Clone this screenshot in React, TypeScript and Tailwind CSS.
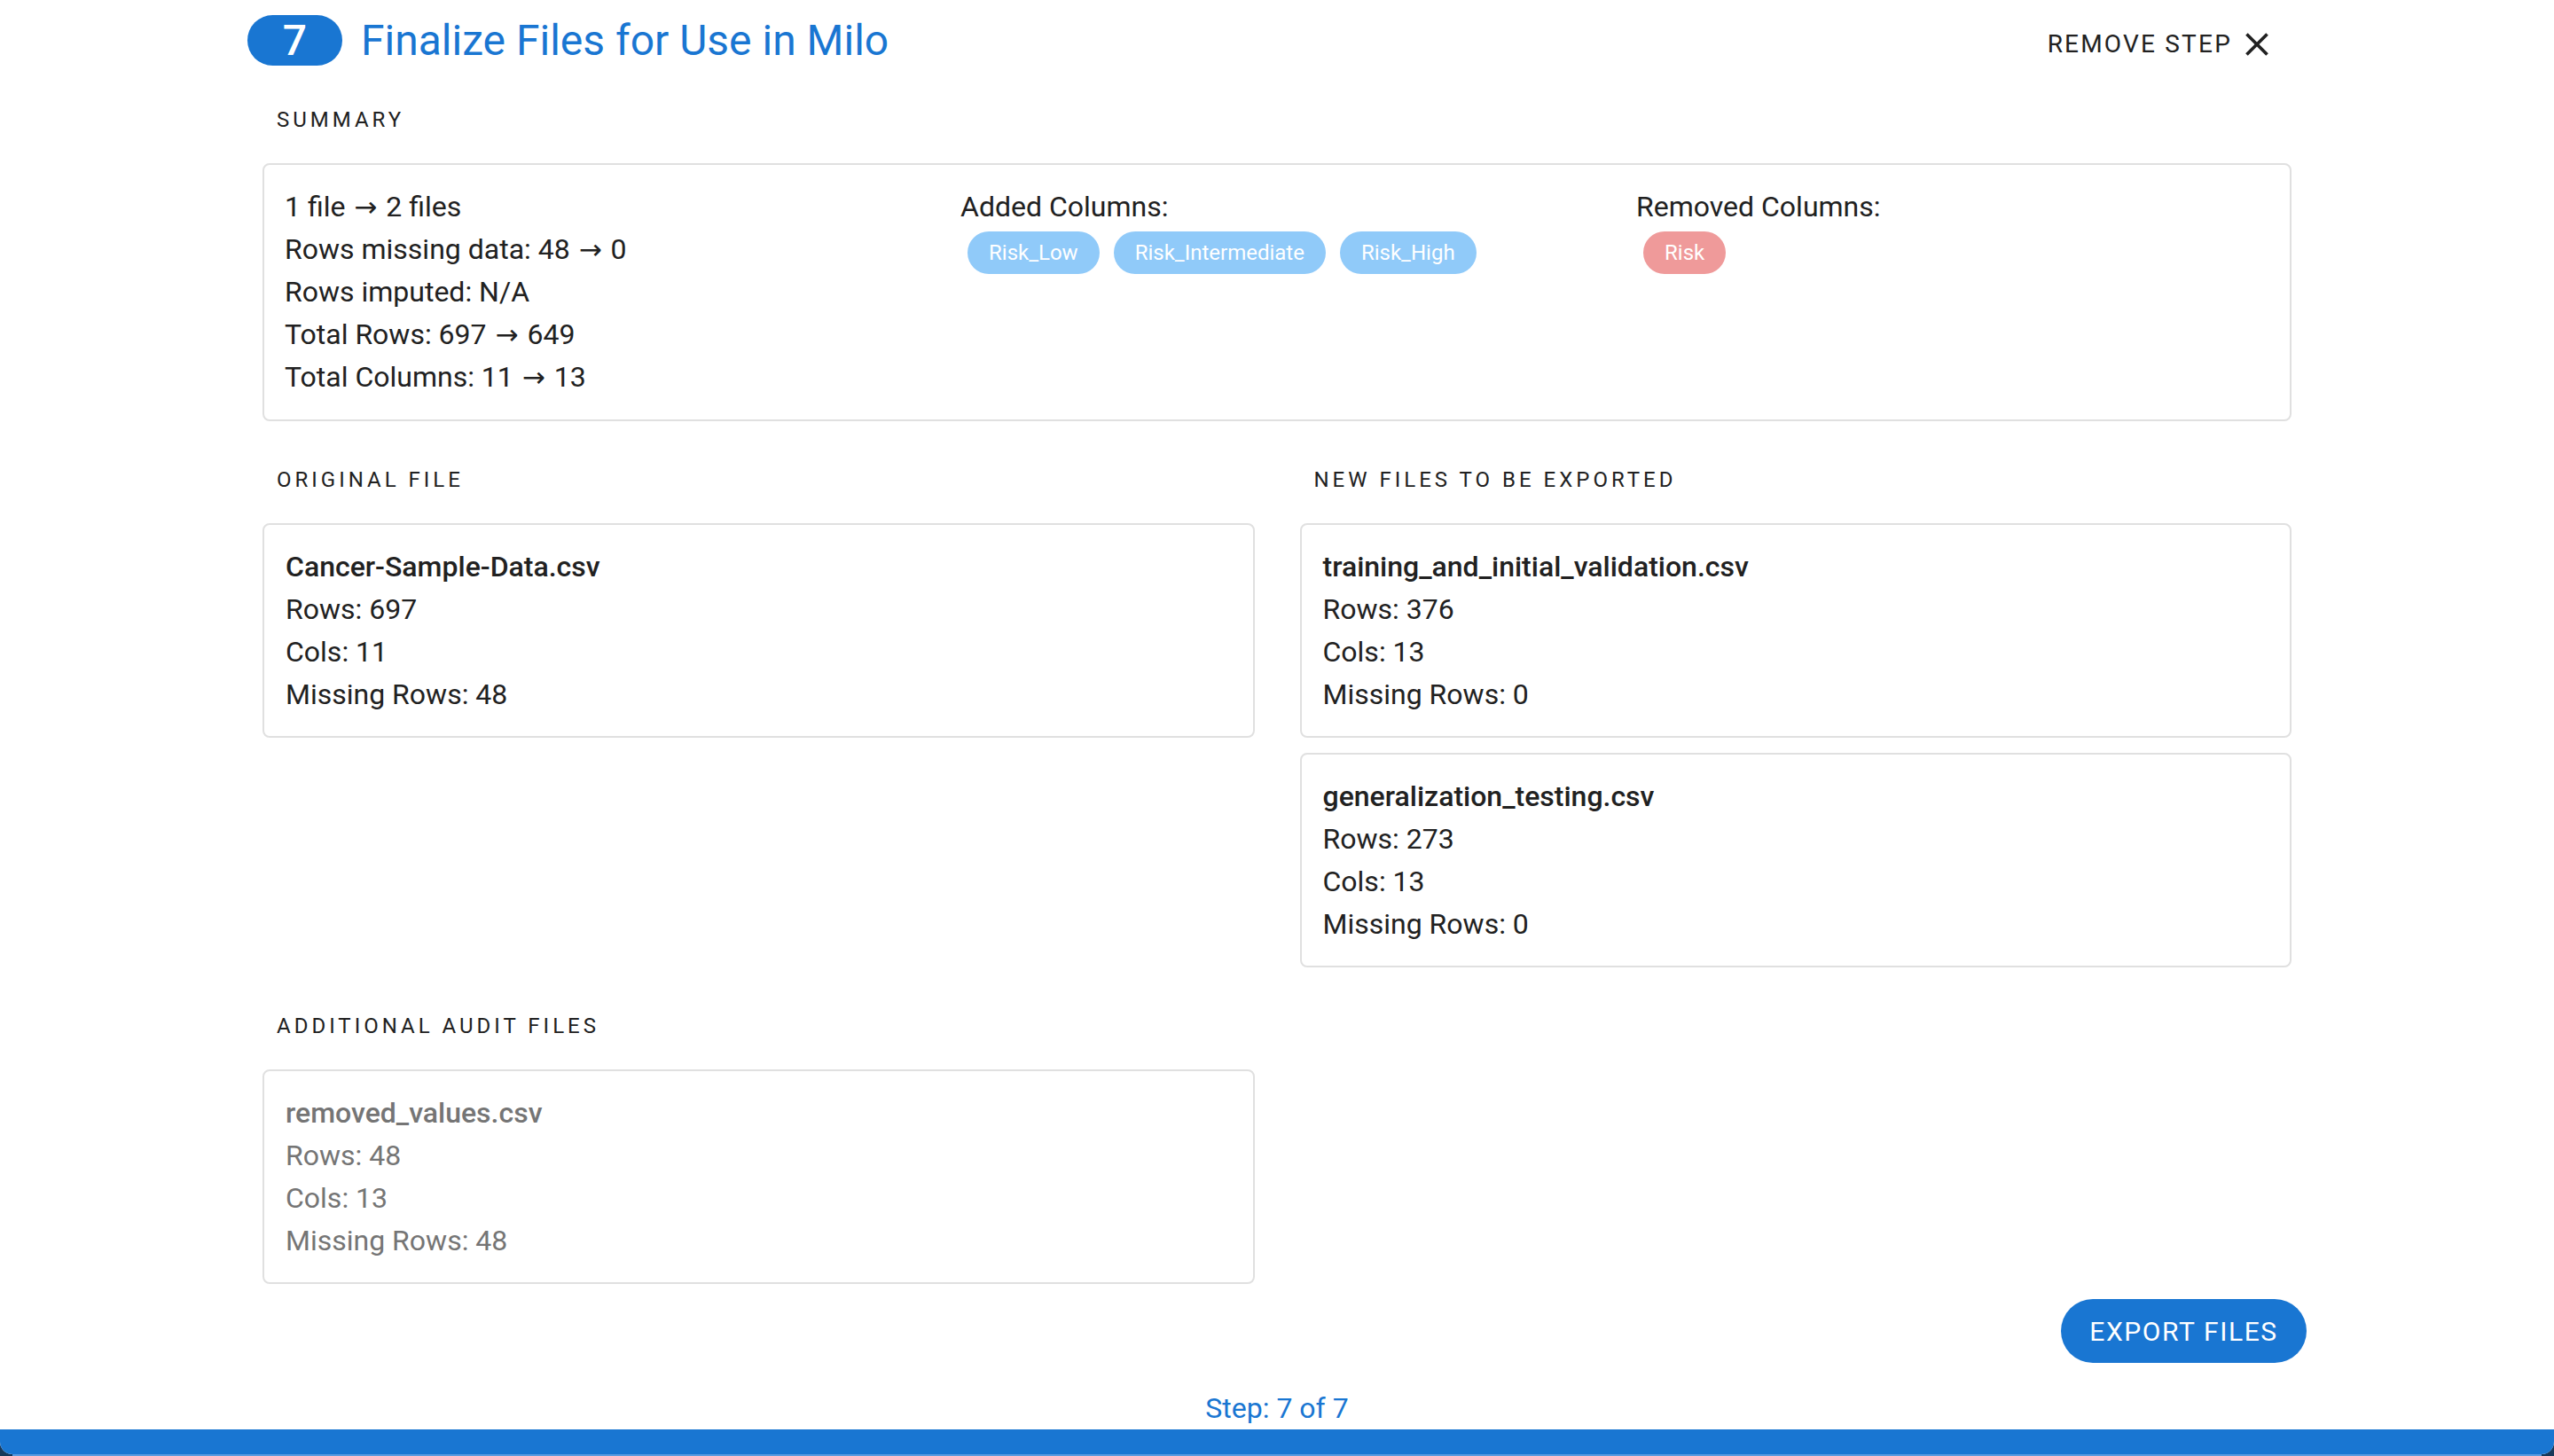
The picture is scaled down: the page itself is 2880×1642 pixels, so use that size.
import React from 'react'

interface FileInfo {
  name: string
  rows: number
  cols: number
  missing: number
}

const originalFile: FileInfo = { name: 'Cancer-Sample-Data.csv', rows: 697, cols: 11, missing: 48 }

const newFiles: FileInfo[] = [
  { name: 'training_and_initial_validation.csv', rows: 376, cols: 13, missing: 0 },
  { name: 'generalization_testing.csv', rows: 273, cols: 13, missing: 0 },
]

const auditFile: FileInfo = { name: 'removed_values.csv', rows: 48, cols: 13, missing: 48 }

// [before, after] pairs; an arrow is drawn between them
const summaryLines: [string, string | null][] = [
  ['1 file', '2 files'],
  ['Rows missing data: 48', '0'],
  ['Rows imputed: N/A', null],
  ['Total Rows: 697', '649'],
  ['Total Columns: 11', '13'],
]

const addedColumns = ['Risk_Low', 'Risk_Intermediate', 'Risk_High']
const removedColumns = ['Risk']

function Arrow() {
  return <span className="mx-[2px] font-['DejaVu_Sans'] text-[31px] leading-[0]">→</span>
}

function SectionLabel({ children }: { children: React.ReactNode }) {
  return (
    <div className="pl-[16px] text-[24px] leading-[24px] tracking-[4px] uppercase text-[#212121] mb-[37px]">
      {children}
    </div>
  )
}

function Chip({ label, color }: { label: string; color: 'blue' | 'red' }) {
  return (
    <span
      className={`mx-[8px] inline-flex h-[48px] items-center rounded-full px-[24px] text-[24px] text-white ${
        color === 'blue' ? 'bg-[#90caf9]' : 'bg-[#ef9a9a]'
      }`}
    >
      {label}
    </span>
  )
}

function FileCard({ file, muted = false }: { file: FileInfo; muted?: boolean }) {
  return (
    <div
      className={`rounded-[8px] border-2 border-[#e0e0e0] bg-white px-[24px] pt-[23px] pb-[23px] text-[32px] leading-[48px] ${
        muted ? 'text-[#757575]' : 'text-[#212121]'
      }`}
    >
      <div className="font-medium">{file.name}</div>
      <div>Rows: {file.rows}</div>
      <div>Cols: {file.cols}</div>
      <div>Missing Rows: {file.missing}</div>
    </div>
  )
}

export default function App() {
  return (
    <div className="min-h-screen w-full bg-[#17385a] font-[Roboto,sans-serif]">
      <div className="flex h-[1640px] flex-col overflow-hidden rounded-b-[14px] bg-white">
        <div className="mx-auto w-[2322px] pt-[17px]">
          {/* Header */}
          <div className="flex h-[57px] items-start justify-between">
            <div className="flex items-center gap-[21px]">
              <div className="flex h-[57px] w-[107px] items-center justify-center rounded-full bg-[#1976d2] text-[48px] font-medium leading-none text-white">
                7
              </div>
              <h1 className="text-[48px] leading-[57px] text-[#1976d2]">Finalize Files for Use in Milo</h1>
            </div>
            <button className="mt-[11px] mr-[34px] flex h-[44px] items-center gap-[6px] text-[28px] tracking-[2.2px] text-[#212121]">
              REMOVE STEP
              <svg viewBox="0 0 24 24" className="h-[44px] w-[44px]" fill="currentColor">
                <path d="M19 6.41 17.59 5 12 10.59 6.41 5 5 6.41 10.59 12 5 17.59 6.41 19 12 13.41 17.59 19 19 17.59 13.41 12z" />
              </svg>
            </button>
          </div>

          <div className="px-[17px]">
            {/* Summary */}
            <div className="mt-[49px]">
              <SectionLabel>Summary</SectionLabel>
              <div className="grid grid-cols-[762px_762px_1fr] rounded-[8px] border-2 border-[#e0e0e0] pt-[23px] pb-[24px] text-[32px] leading-[48px] text-[#212121]">
                <div className="pl-[23px]">
                  {summaryLines.map(([before, after]) => (
                    <div key={before} className="h-[48px]">
                      {before}
                      {after !== null && (
                        <>
                          {' '}
                          <Arrow /> {after}
                        </>
                      )}
                    </div>
                  ))}
                </div>
                <div className="pl-[23px]">
                  <div>Added Columns:</div>
                  <div className="mt-[4px] flex flex-wrap">
                    {addedColumns.map((c) => (
                      <Chip key={c} label={c} color="blue" />
                    ))}
                  </div>
                </div>
                <div className="pl-[23px]">
                  <div>Removed Columns:</div>
                  <div className="mt-[4px] flex flex-wrap">
                    {removedColumns.map((c) => (
                      <Chip key={c} label={c} color="red" />
                    ))}
                  </div>
                </div>
              </div>
            </div>

            {/* Files */}
            <div className="mt-[54px] grid grid-cols-2 gap-x-[51px]">
              <div>
                <SectionLabel>Original File</SectionLabel>
                <FileCard file={originalFile} />
              </div>
              <div>
                <SectionLabel>New Files to be Exported</SectionLabel>
                <div className="flex flex-col gap-[17px]">
                  {newFiles.map((f) => (
                    <FileCard key={f.name} file={f} />
                  ))}
                </div>
              </div>
            </div>

            {/* Audit */}
            <div className="mt-[54px] grid grid-cols-2 gap-x-[51px]">
              <div>
                <SectionLabel>Additional Audit Files</SectionLabel>
                <FileCard file={auditFile} muted />
              </div>
            </div>
          </div>

          <div className="mt-[17px] flex justify-end">
            <button className="flex h-[72px] w-[277px] items-center justify-center rounded-full bg-[#1976d2] text-[30px] tracking-[1.6px] text-white">
              EXPORT FILES
            </button>
          </div>
        </div>

        <div className="mt-[27px] text-center text-[32px] leading-[48px] text-[#1976d2]">Step: 7 of 7</div>
        <div className="mt-auto h-[29px] bg-[#1976d2]" />
      </div>
      <div className="mx-[14px] h-[2px] bg-[#5b9be0]" />
    </div>
  )
}
